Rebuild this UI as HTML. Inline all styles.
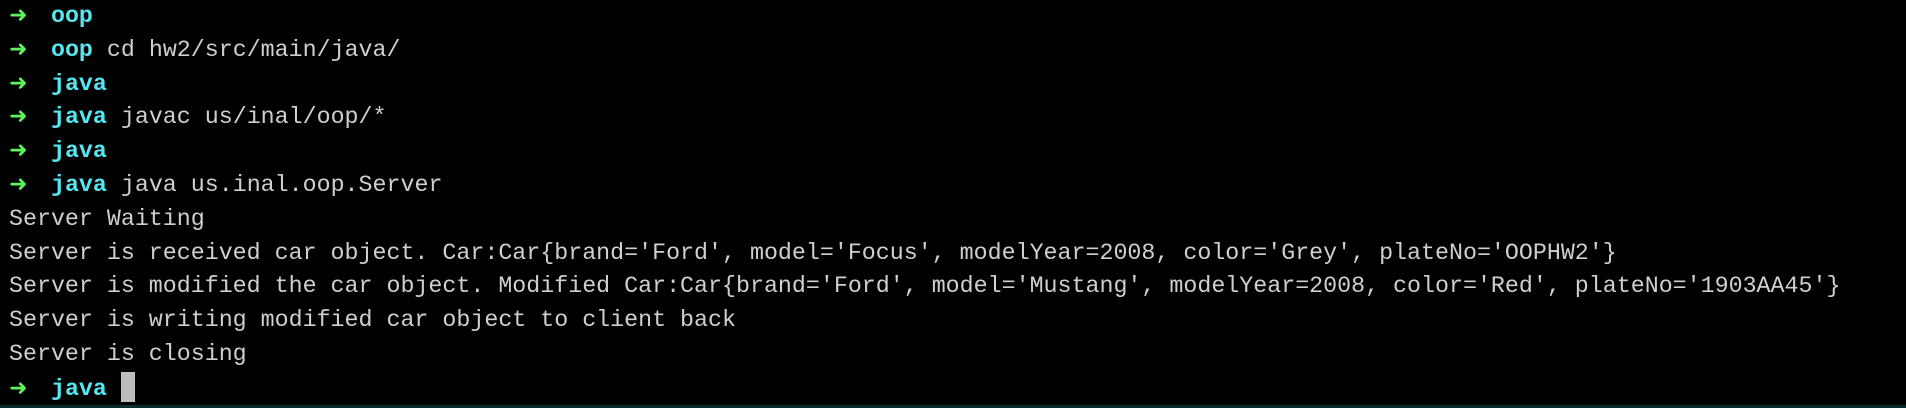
<!DOCTYPE html>
<html><head><meta charset="utf-8"><style>
html,body{margin:0;padding:0;background:#000;width:1906px;height:408px;overflow:hidden;position:relative}
pre{margin:0;position:absolute;left:9px;top:0px;font-family:"Liberation Mono",monospace;font-size:23.3px;line-height:33.8px;color:#cfcfcf}
.a{color:#5cf35c;font-weight:bold;font-family:"DejaVu Sans",sans-serif;font-size:22px;display:inline-block;width:14px;line-height:0;overflow:visible}
.c{color:#55e6ef;font-weight:bold}
.cur{display:inline-block;width:14px;height:30px;background:#bdbdbd;vertical-align:-7px;line-height:0}
.strip{position:absolute;left:0;right:0;bottom:0;height:3px;background:#0d2a2a}
</style></head><body>
<pre><span class="a">➜</span>  <span class="c">oop</span>
<span class="a">➜</span>  <span class="c">oop</span> cd hw2/src/main/java/
<span class="a">➜</span>  <span class="c">java</span>
<span class="a">➜</span>  <span class="c">java</span> javac us/inal/oop/*
<span class="a">➜</span>  <span class="c">java</span>
<span class="a">➜</span>  <span class="c">java</span> java us.inal.oop.Server
Server Waiting
Server is received car object. Car:Car{brand='Ford', model='Focus', modelYear=2008, color='Grey', plateNo='OOPHW2'}
Server is modified the car object. Modified Car:Car{brand='Ford', model='Mustang', modelYear=2008, color='Red', plateNo='1903AA45'}
Server is writing modified car object to client back
Server is closing
<span class="a">➜</span>  <span class="c">java</span> <span class="cur"></span></pre>
<div class="strip"></div>
</body></html>
